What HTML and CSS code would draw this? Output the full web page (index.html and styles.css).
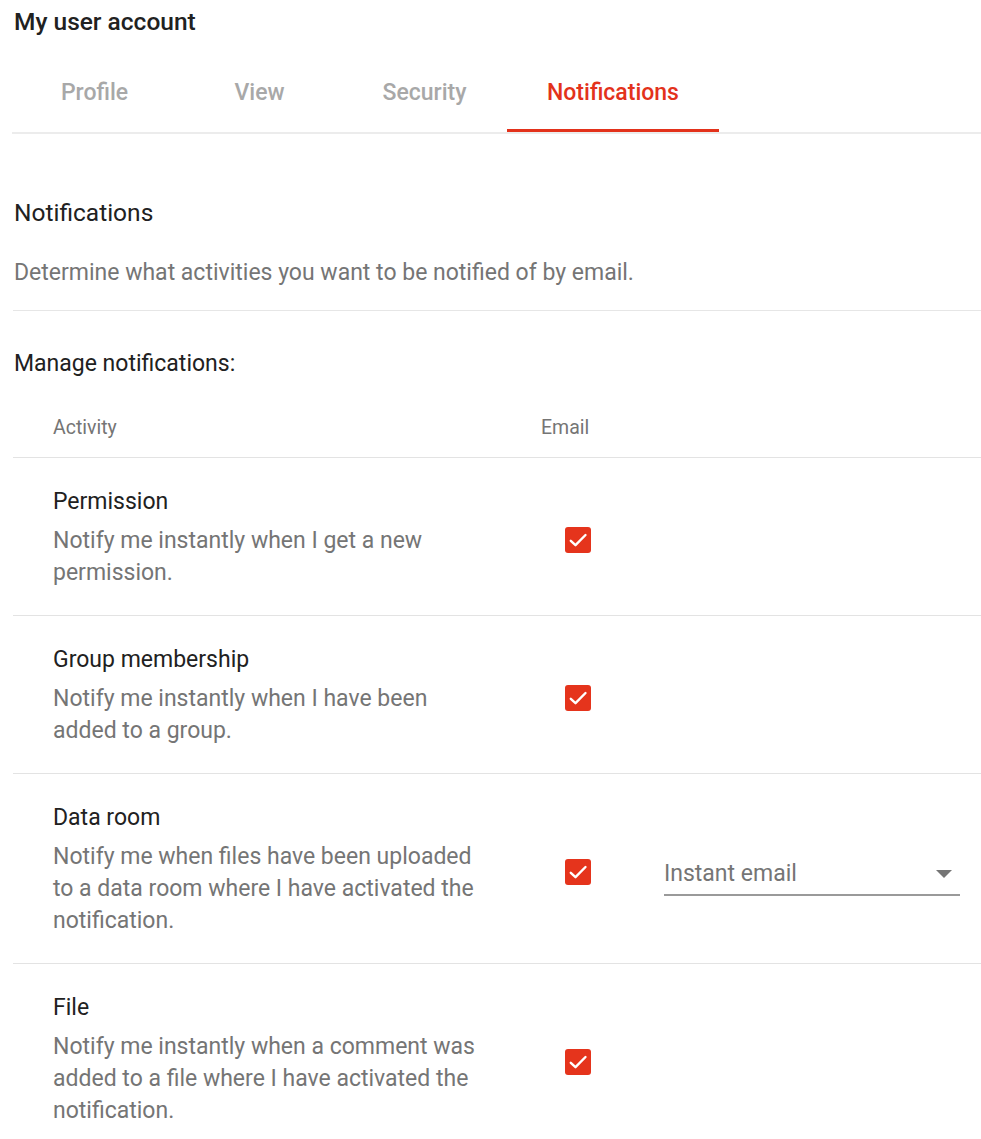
FILE: index.html
```html
<!DOCTYPE html>
<html lang="en">
<head>
<meta charset="utf-8">
<title>My user account</title>
<link rel="stylesheet" href="styles.css">
</head>
<body>
<div class="page">
  <h1 class="page-title">My user account</h1>
  <nav class="tabs">
    <div class="tab">Profile</div>
    <div class="tab">View</div>
    <div class="tab">Security</div>
    <div class="tab active">Notifications</div>
  </nav>

  <section class="intro">
    <h2 class="section-title">Notifications</h2>
    <p class="section-desc">Determine what activities you want to be notified of by email.</p>
  </section>

  <h3 class="manage-title">Manage notifications:</h3>

  <div class="table">
    <div class="row head">
      <div class="cell activity">Activity</div>
      <div class="cell email">Email</div>
      <div class="cell extra"></div>
    </div>

    <div class="row">
      <div class="cell activity">
        <div class="act-title">Permission</div>
        <div class="act-desc">Notify me instantly when I get a new permission.</div>
      </div>
      <div class="cell email"><span class="checkbox"><svg viewBox="0 0 26 26"><path d="M5.8 13.8l4.7 4.4L20.5 8" /></svg></span></div>
      <div class="cell extra"></div>
    </div>

    <div class="row">
      <div class="cell activity">
        <div class="act-title">Group membership</div>
        <div class="act-desc">Notify me instantly when I have been added to a group.</div>
      </div>
      <div class="cell email"><span class="checkbox"><svg viewBox="0 0 26 26"><path d="M5.8 13.8l4.7 4.4L20.5 8" /></svg></span></div>
      <div class="cell extra"></div>
    </div>

    <div class="row">
      <div class="cell activity">
        <div class="act-title">Data room</div>
        <div class="act-desc">Notify me when files have been uploaded to a data room where I have activated the notification.</div>
      </div>
      <div class="cell email"><span class="checkbox"><svg viewBox="0 0 26 26"><path d="M5.8 13.8l4.7 4.4L20.5 8" /></svg></span></div>
      <div class="cell extra">
        <div class="select">
          <span class="select-value">Instant email</span>
          <span class="select-arrow"></span>
        </div>
      </div>
    </div>

    <div class="row last">
      <div class="cell activity">
        <div class="act-title">File</div>
        <div class="act-desc">Notify me instantly when a comment was added to a file where I have activated the notification.</div>
      </div>
      <div class="cell email"><span class="checkbox"><svg viewBox="0 0 26 26"><path d="M5.8 13.8l4.7 4.4L20.5 8" /></svg></span></div>
      <div class="cell extra"></div>
    </div>
  </div>
</div>
</body>
</html>
```

FILE: styles.css
```css
* { box-sizing: border-box; }

html, body {
  margin: 0;
  padding: 0;
  background: #ffffff;
}

body {
  font-family: Roboto, "Noto Sans", "Liberation Sans", Arial, sans-serif;
  color: #212121;
}

.page {
  padding-left: 13px;
}

.page-title {
  margin: 0;
  padding: 8px 0 0 1px;
  font-size: 24.5px;
  line-height: 28px;
  font-weight: 500;
  color: #212121;
}

.tabs {
  display: flex;
  margin-top: 16px;
  margin-left: -1px;
  border-bottom: 2px solid #ececec;
}

.tab {
  min-width: 165px;
  height: 80px;
  padding: 3px 40px 0;
  display: flex;
  align-items: center;
  justify-content: center;
  font-size: 23px;
  font-weight: 500;
  color: #a8a8a8;
  border-bottom: 3px solid transparent;
}

.tab.active {
  color: #e3321b;
  border-bottom-color: #e3321b;
}

.intro {
  border-bottom: 1px solid #e6e6e6;
  padding: 63px 0 21px 1px;
}

.section-title {
  margin: 0;
  font-size: 24.5px;
  line-height: 32px;
  font-weight: 400;
  color: #212121;
}

.section-desc {
  margin: 28px 0 0;
  font-size: 23px;
  line-height: 32px;
  color: #757575;
}

.manage-title {
  margin: 0;
  padding: 37px 0 0 1px;
  font-size: 23px;
  line-height: 32px;
  font-weight: 400;
  color: #212121;
}

.table {
  margin-top: 34px;
}

.row {
  display: grid;
  grid-template-columns: 488px 163px 1fr;
  align-items: center;
  border-bottom: 1px solid #e3e3e3;
}

.row.last {
  border-bottom: none;
}

.row.head {
  height: 44px;
  align-items: start;
}

.row.head .cell {
  font-size: 19.5px;
  line-height: 28px;
  color: #757575;
}

.cell.activity {
  padding-left: 40px;
}

.row:not(.head) .cell.activity {
  padding-top: 29px;
  padding-bottom: 26px;
}

.row.head .cell.email {
  padding-left: 40px;
}

.act-title {
  font-size: 23px;
  line-height: 30px;
  color: #212121;
}

.act-desc {
  margin-top: 8px;
  font-size: 23px;
  line-height: 32px;
  color: #757575;
  max-width: 432px;
}

.row:not(.head) .cell.email {
  padding-left: 64px;
  padding-top: 6px;
}

.checkbox {
  display: block;
  width: 26px;
  height: 26px;
  border-radius: 3px;
  background: #e5341c;
}

.checkbox svg {
  display: block;
  width: 26px;
  height: 26px;
}

.checkbox path {
  fill: none;
  stroke: #ffffff;
  stroke-width: 2.4;
  stroke-linecap: round;
  stroke-linejoin: round;
}

.cell.extra {
  padding-right: 21px;
  padding-top: 12px;
}

.select {
  display: flex;
  align-items: center;
  justify-content: space-between;
  height: 42px;
  border-bottom: 2px solid #9a9a9a;
}

.select-value {
  font-size: 23px;
  color: #757575;
}

.select-arrow {
  width: 0;
  height: 0;
  border-left: 8px solid transparent;
  border-right: 8px solid transparent;
  border-top: 8px solid #757575;
  margin-right: 8px;
}
```
